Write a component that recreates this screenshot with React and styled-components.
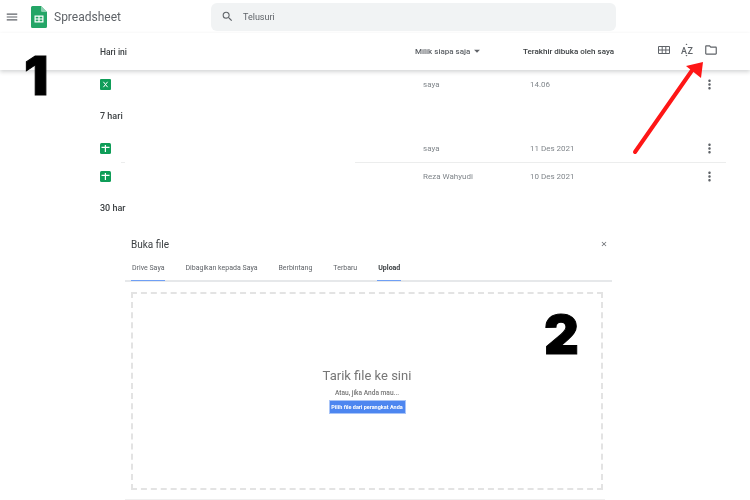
import React from 'react';
import styled, { createGlobalStyle } from 'styled-components';
import {
  MdMenu,
  MdSearch,
  MdMoreVert,
  MdOutlineFolder,
  MdClose,
  MdArrowDropDown,
} from 'react-icons/md';

const GlobalStyle = createGlobalStyle`
  html, body {
    margin: 0;
    padding: 0;
    background: #fff;
  }
  body {
    font-family: Roboto, "Liberation Sans", sans-serif;
    color: #3c4043;
  }
`;

const Page = styled.div`
  position: relative;
  width: 750px;
  height: 500px;
  overflow: hidden;
  background: #fff;
`;

const Content = styled.div`
  filter: blur(0.45px);
`;

const TopBar = styled.header`
  display: flex;
  align-items: center;
  height: 33px;
  padding-left: 5px;
`;

const MenuButton = styled.div`
  display: flex;
  width: 15px;
  color: #5f6368;
  font-size: 14px;
`;

const Logo = styled.svg`
  width: 16px;
  height: 22px;
  margin-left: 11px;
`;

const AppTitle = styled.div`
  width: 157px;
  margin-left: 7px;
  font-size: 12px;
  color: #5f6368;
`;

const SearchBox = styled.div`
  display: flex;
  align-items: center;
  gap: 9px;
  width: 405px;
  height: 28px;
  margin-top: 1px;
  padding-left: 10px;
  box-sizing: border-box;
  border-radius: 6px;
  background: #f1f3f4;
  color: #5f6368;
  font-size: 9px;
  svg {
    font-size: 13px;
    color: #5f6368;
    margin-top: -2px;
  }
`;

const ListHeader = styled.div`
  display: grid;
  grid-template-columns: 100px 315px 108px 134px 23px 24px 24px;
  align-items: center;
  height: 37px;
  box-shadow: 0 2px 4px rgba(60, 64, 67, 0.22);
  font-size: 8px;
  font-weight: 500;
`;

const ColumnLabel = styled.div`
  display: flex;
  align-items: center;
  grid-column: ${(p) => p.$col};
  margin-top: -1px;
  color: ${(p) => (p.$muted ? '#5f6368' : '#3c4043')};
  svg {
    font-size: 14px;
  }
`;

const HeaderTitle = styled(ColumnLabel)`
  margin-top: 1px;
  font-size: 8.5px;
`;

const ViewIcon = styled.div`
  grid-column: ${(p) => p.$col};
  display: flex;
  margin-top: -4px;
  color: #5f6368;
  font-size: 14px;
`;

const SectionLabel = styled.div`
  height: ${(p) => p.$height}px;
  display: flex;
  align-items: center;
  padding-left: 100px;
  font-size: 9px;
  font-weight: 500;
`;

const FileRow = styled.div`
  display: grid;
  grid-template-columns: 100px 323px 107px 172px 16px;
  align-items: center;
  height: 28px;
  font-size: 8px;
  color: #80868b;
`;

const FileIcon = styled.svg`
  grid-column: 2;
  width: 11px;
  height: 11px;
`;

const Owner = styled.div`
  grid-column: 3;
`;

const Modified = styled.div`
  grid-column: 4;
`;

const MoreButton = styled.div`
  grid-column: 5;
  display: flex;
  color: #5f6368;
  font-size: 15px;
`;

const RowDivider = styled.div`
  display: flex;
  gap: 230px;
  height: 1px;
  margin: 0 0 -1px 121px;
`;

const DividerPiece = styled.div`
  width: ${(p) => p.$width}px;
  background: #eceded;
`;

const Dialog = styled.section`
  width: 487px;
  margin-left: 125px;
`;

const DialogHead = styled.div`
  display: flex;
  align-items: center;
  justify-content: space-between;
  height: 33px;
  padding: 5px 4px 0 6px;
  box-sizing: border-box;
  font-size: 10px;
  color: #3c4043;
  svg {
    font-size: 8px;
    color: #5f6368;
  }
`;

const Tabs = styled.nav`
  display: flex;
  gap: 19px;
  height: 24px;
  box-sizing: border-box;
  padding-left: 6px;
  border-bottom: 2px solid #e6e8ea;
`;

const Tab = styled.div`
  display: flex;
  align-items: center;
  height: 23px;
  box-sizing: border-box;
  padding: 0 1px 2px;
  font-size: 7px;
  font-weight: ${(p) => (p.$strong ? 700 : 400)};
  color: ${(p) => (p.$strong ? '#3c4043' : '#5f6368')};
  border-bottom: 1px solid ${(p) => (p.$active ? '#6f9ff5' : 'transparent')};
`;

const DropZone = styled.div`
  display: flex;
  flex-direction: column;
  align-items: center;
  justify-content: center;
  width: 472px;
  height: 198px;
  margin: 10px 0 0 6px;
  box-sizing: border-box;
  border: 2px dashed #e3e3e3;
`;

const DropTitle = styled.div`
  font-size: 13px;
  color: #777;
`;

const DropHint = styled.div`
  margin-top: 6px;
  font-size: 6.6px;
  font-weight: 500;
  color: #777;
`;

const PickButton = styled.div`
  margin-top: 3px;
  width: 77px;
  height: 14px;
  box-sizing: border-box;
  display: flex;
  align-items: center;
  justify-content: center;
  border: 1.5px solid #a9c5f8;
  background: #4d86f0;
  color: #fff;
  font-size: 5.5px;
  font-weight: 700;
  white-space: nowrap;
`;

const BottomRule = styled.div`
  width: 480px;
  height: 1px;
  margin-top: 9px;
  background: #efefef;
`;

const Numeral = styled.div`
  position: absolute;
  left: ${(p) => p.$left}px;
  top: ${(p) => p.$top}px;
  font-family: Inter, Roboto, sans-serif;
  font-size: 54px;
  font-weight: 900;
  line-height: 1;
  color: #000;
  -webkit-text-stroke: 1px #000;
`;

const Arrow = styled.svg`
  position: absolute;
  left: 625px;
  top: 55px;
  width: 90px;
  height: 105px;
`;

const SheetIcon = () => (
  <FileIcon viewBox="0 0 11 11">
    <rect width="11" height="11" rx="1.5" fill="#0f9d58" />
    <path d="M4.800 2h1.200v1.700H9.500v1.200H6V9H4.800V4.900H1.500V3.700h3.300z" fill="#fff" />
  </FileIcon>
);

const ExcelIcon = () => (
  <FileIcon viewBox="0 0 11 11">
    <rect width="11" height="11" rx="1" fill="#0f9d58" />
    <path d="M3.400 2.800l2.100 2.700 2.100-2.700M3.400 8.200l2.100-2.700 2.100 2.700" fill="none" stroke="#fff" strokeWidth="1" />
  </FileIcon>
);

const GridIcon = () => (
  <svg width="14" height="14" viewBox="0 0 14 14">
    <path d="M1.500 3.500h11v7h-11zM1.500 7h11M5.200 3.500v7M8.800 3.500v7" fill="none" stroke="#5f6368" strokeWidth="1" />
  </svg>
);

const SortIcon = () => (
  <svg width="14" height="14" viewBox="0 0 14 14" fill="#5f6368" fontSize="9" fontFamily="Roboto, sans-serif">
    <text x="1" y="10.500">A</text>
    <text x="7.500" y="10.500">Z</text>
    <path d="M6.500 0.500l1 1.500h-2zM6.500 13.500l1-1.500h-2z" />
  </svg>
);

const files = [
  { owner: 'saya', date: '11 Des 2021' },
  { owner: 'Reza Wahyudi', date: '10 Des 2021' },
];

const tabs = ['Drive Saya', 'Dibagikan kepada Saya', 'Berbintang', 'Terbaru', 'Upload'];

export default function App() {
  return (
    <Page>
      <GlobalStyle />
      <Content>
        <TopBar>
          <MenuButton><MdMenu /></MenuButton>
          <Logo viewBox="0 0 16 22">
            <path d="M1.500 0H10l6 6v14.500a1.500 1.500 0 0 1-1.500 1.500h-13A1.500 1.500 0 0 1 0 20.500v-19A1.500 1.500 0 0 1 1.500 0z" fill="#23a566" />
            <path d="M10 0l6 6h-4.500A1.500 1.500 0 0 1 10 4.500z" fill="#8ed1b1" />
            <path d="M3.500 9.500h9v7h-9zM4.700 10.700v1.700h2.700v-1.700zm3.900 0v1.700h2.700v-1.700zM4.700 13.600v1.700h2.700v-1.700zm3.900 0v1.700h2.700v-1.700z" fill="#fff" fillRule="evenodd" />
          </Logo>
          <AppTitle>Spreadsheet</AppTitle>
          <SearchBox>
            <MdSearch />
            <span>Telusuri</span>
          </SearchBox>
        </TopBar>

        <ListHeader>
          <HeaderTitle $col={2}>Hari ini</HeaderTitle>
          <ColumnLabel $col={3} $muted>Milik siapa saja<MdArrowDropDown /></ColumnLabel>
          <ColumnLabel $col={4}>Terakhir dibuka oleh saya</ColumnLabel>
          <ViewIcon $col={5}><GridIcon /></ViewIcon>
          <ViewIcon $col={6}><SortIcon /></ViewIcon>
          <ViewIcon $col={7}><MdOutlineFolder /></ViewIcon>
        </ListHeader>

        <FileRow>
          <ExcelIcon />
          <Owner>saya</Owner>
          <Modified>14.06</Modified>
          <MoreButton><MdMoreVert /></MoreButton>
        </FileRow>

        <SectionLabel $height={36}>7 hari</SectionLabel>

        {files.map((file, i) => (
          <React.Fragment key={file.date}>
            <FileRow>
              <SheetIcon />
              <Owner>{file.owner}</Owner>
              <Modified>{file.date}</Modified>
              <MoreButton><MdMoreVert /></MoreButton>
            </FileRow>
            {i === 0 && (
              <RowDivider>
                <DividerPiece $width={4} />
                <DividerPiece $width={371} />
              </RowDivider>
            )}
          </React.Fragment>
        ))}

        <SectionLabel $height={35}>30 har</SectionLabel>

        <Dialog>
          <DialogHead>
            <span>Buka file</span>
            <MdClose />
          </DialogHead>
          <Tabs>
            {tabs.map((tab) => (
              <Tab key={tab} $active={tab === 'Drive Saya' || tab === 'Upload'} $strong={tab === 'Upload'}>
                {tab}
              </Tab>
            ))}
          </Tabs>
          <DropZone>
            <DropTitle>Tarik file ke sini</DropTitle>
            <DropHint>Atau, jika Anda mau...</DropHint>
            <PickButton>Pilih file dari perangkat Anda</PickButton>
          </DropZone>
          <BottomRule />
        </Dialog>
      </Content>

      <Numeral $left={24} $top={49}>1</Numeral>
      <Numeral $left={544} $top={308}>2</Numeral>
      <Arrow viewBox="0 0 90 105">
        <path d="M10 97L68 14" stroke="#fe1616" strokeWidth="4" strokeLinecap="round" />
        <path d="M78 7L61 11L76 23z" fill="#fe1616" />
      </Arrow>
    </Page>
  );
}
